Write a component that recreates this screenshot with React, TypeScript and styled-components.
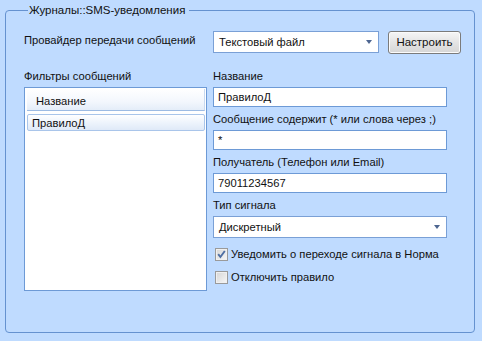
import React from "react";
import styled, { createGlobalStyle } from "styled-components";

const Global = createGlobalStyle`
  html, body { margin: 0; padding: 0; }
  body {
    background: #bfdbff;
    font-family: "Liberation Sans", Arial, sans-serif;
    font-size: 11.2px;
    color: #111;
  }
`;

const Page = styled.div`
  width: 482px;
  height: 341px;
  box-sizing: border-box;
  padding: 3px 7px 8px 5px;
  background: #bfdbff;
`;

const Group = styled.fieldset`
  margin: 0;
  height: 100%;
  box-sizing: border-box;
  border: 1px solid #6592d0;
  border-radius: 4px;
  padding: 14px 0 0 18px;
  min-width: 0;
`;

const Legend = styled.legend`
  padding: 0 4px 0 1px;
  margin-left: 4px;
  line-height: 14px;
  font-size: 11.5px;
  color: #111;
`;

const TopRow = styled.div`
  display: flex;
  align-items: center;
  height: 22px;
`;

const ProviderLabel = styled.div`
  width: 189px;
  line-height: 14px;
  margin-top: -4px;
  white-space: nowrap;
`;

const ComboBox = styled.div<{ $width: number }>`
  position: relative;
  width: ${(p) => p.$width}px;
  height: 22px;
  box-sizing: border-box;
  background: #fff;
  border: 1px solid #7aa0d6;
  display: flex;
  align-items: center;
  padding-left: 5px;
`;

const Arrow = styled.span`
  position: absolute;
  right: 6px;
  top: 50%;
  margin-top: -2px;
  width: 0;
  height: 0;
  border-left: 3.5px solid transparent;
  border-right: 3.5px solid transparent;
  border-top: 4px solid #4d6590;
`;

const Button = styled.button`
  margin-left: 9px;
  width: 73px;
  height: 23px;
  box-sizing: border-box;
  border: 1px solid #7b7b7b;
  border-radius: 3px;
  background: linear-gradient(#f6f6f6, #e4e4e4 50%, #d6d6d6);
  box-shadow: inset 0 0 0 1px #fbfbfb;
  font-family: inherit;
  font-size: 11.5px;
  color: #111;
  padding: 0;
`;

const Body = styled.div`
  display: flex;
  gap: 6px;
  margin-top: 16px;
`;

const LeftCol = styled.div`
  width: 183px;
  display: flex;
  flex-direction: column;
`;

const RightCol = styled.div`
  width: 234px;
  display: flex;
  flex-direction: column;
`;

const Label = styled.div`
  line-height: 14px;
  height: 14px;
  margin-bottom: 4px;
  white-space: nowrap;
`;

const List = styled.div`
  height: 204px;
  box-sizing: border-box;
  background: #fff;
  border: 1px solid #6d9ad6;
  display: flex;
  flex-direction: column;
  padding: 1px 1px 0 2px;
`;

const ListHeader = styled.div`
  height: 22px;
  box-sizing: border-box;
  background: linear-gradient(#ffffff, #f3f7fd 60%, #e4edf9);
  border-bottom: 1px solid #9dbbe3;
  border-right: 1px solid #c8d9f0;
  padding: 2px 0 0 9px;
  display: flex;
  align-items: center;
`;

const ListRow = styled.div`
  margin-top: 3px;
  height: 17px;
  box-sizing: border-box;
  border: 1px solid #a9c5ea;
  border-radius: 2px;
  background: linear-gradient(#ffffff, #eef4fc 50%, #dfe9f8);
  padding-left: 4px;
  display: flex;
  align-items: center;
`;

const Field = styled.div`
  display: flex;
  flex-direction: column;
  margin-bottom: 5px;
`;

const Input = styled.div`
  height: 20px;
  box-sizing: border-box;
  background: #fff;
  border: 1px solid #6d9ad6;
  padding-left: 4px;
  display: flex;
  align-items: center;
`;

const CheckRow = styled.label<{ $top: number }>`
  display: flex;
  align-items: center;
  margin-top: ${(p) => p.$top}px;
  margin-left: 2px;
  height: 14px;
  gap: 3px;
  white-space: nowrap;
`;

const Box = styled.span`
  width: 13px;
  height: 13px;
  flex: none;
  box-sizing: border-box;
  border: 1px solid #9a9a9a;
  background: linear-gradient(135deg, #d6d6d6, #f7f7f7);
  box-shadow: inset 0 0 0 1px #f0f0f0;
  display: flex;
  align-items: center;
  justify-content: center;
`;

function Check({ checked }: { checked?: boolean }) {
  return (
    <Box>
      {checked && (
        <svg width="9" height="9" viewBox="0 0 9 9">
          <path d="M1.2 4.2 L3.4 7 L7.8 1" fill="none" stroke="#4f6fa3" strokeWidth="1.9" />
        </svg>
      )}
    </Box>
  );
}

export default function App() {
  return (
    <Page>
      <Global />
      <Group>
        <Legend>Журналы::SMS-уведомления</Legend>
        <TopRow>
          <ProviderLabel>Провайдер передачи сообщений</ProviderLabel>
          <ComboBox $width={166}>
            Текстовый файл
            <Arrow />
          </ComboBox>
          <Button>Настроить</Button>
        </TopRow>
        <Body>
          <LeftCol>
            <Label>Фильтры сообщений</Label>
            <List>
              <ListHeader>Название</ListHeader>
              <ListRow>ПравилоД</ListRow>
            </List>
          </LeftCol>
          <RightCol>
            <Field>
              <Label>Название</Label>
              <Input>ПравилоД</Input>
            </Field>
            <Field>
              <Label>Сообщение содержит (* или слова через ;)</Label>
              <Input>*</Input>
            </Field>
            <Field>
              <Label>Получатель (Телефон или Email)</Label>
              <Input>79011234567</Input>
            </Field>
            <Field>
              <Label>Тип сигнала</Label>
              <ComboBox $width={234}>
                Дискретный
                <Arrow />
              </ComboBox>
            </Field>
            <CheckRow $top={4}>
              <Check checked />
              Уведомить о переходе сигнала в Норма
            </CheckRow>
            <CheckRow $top={9}>
              <Check />
              Отключить правило
            </CheckRow>
          </RightCol>
        </Body>
      </Group>
    </Page>
  );
}
